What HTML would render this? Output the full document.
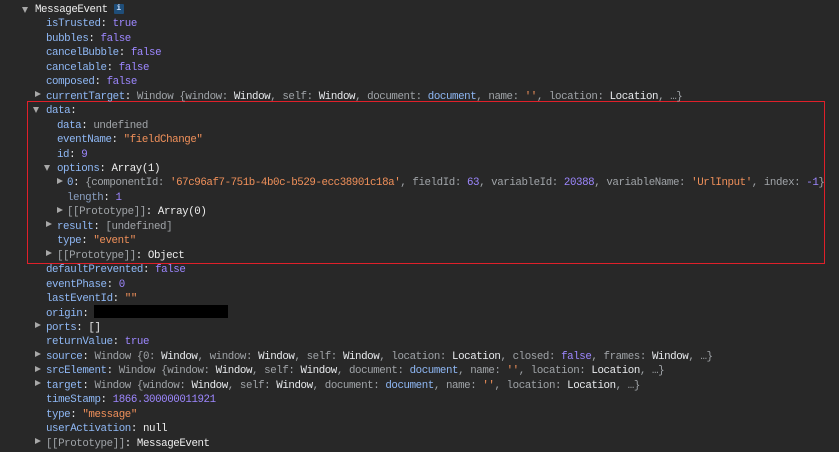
<!DOCTYPE html>
<html><head><meta charset="utf-8"><style>
body{margin:0;background:#282828;width:839px;height:452px;overflow:hidden;position:relative;font-family:"Liberation Mono",monospace;font-size:10.8px;letter-spacing:-0.42px;color:#e8eaed}
#w{position:absolute;left:0;top:2px;width:839px;height:450px}
.r{position:absolute;height:14px;line-height:14px;white-space:pre}
.k{color:#8fb8f5}.g{color:#a0a4a8}.n{color:#9d87ff}.s{color:#f0905a}.w{color:#eeeeee}
.tr{position:absolute;width:0;height:0;border-left:6px solid #a8a8a8;border-top:3.5px solid transparent;border-bottom:3.5px solid transparent}
.td{position:absolute;width:0;height:0;border-top:6px solid #a8a8a8;border-left:3.5px solid transparent;border-right:3.5px solid transparent}
.box{position:absolute;left:27px;top:101px;width:796px;height:161px;border:1px solid #e0202a}
.info{display:inline-block;width:10px;height:10px;background:#1f4e79;color:#cfe3ff;font-size:8px;line-height:10px;text-align:center;vertical-align:middle;border-radius:1px;font-weight:bold;letter-spacing:0}
.blk{position:absolute;left:94px;top:305px;width:134px;height:13px;background:#000}
</style></head><body>
<div class="box"></div>
<div class="blk"></div>
<div id="w">
<div class="td" style="left:22px;top:5px"></div><div class="r" style="left:35px;top:1px"><span class="w">MessageEvent</span> <span class="info">i</span></div>
<div class="r" style="left:46px;top:15.4px"><span class="k">isTrusted</span>: <span class="n">true</span></div>
<div class="r" style="left:46px;top:29.9px"><span class="k">bubbles</span>: <span class="n">false</span></div>
<div class="r" style="left:46px;top:44.3px"><span class="k">cancelBubble</span>: <span class="n">false</span></div>
<div class="r" style="left:46px;top:58.8px"><span class="k">cancelable</span>: <span class="n">false</span></div>
<div class="r" style="left:46px;top:73.2px"><span class="k">composed</span>: <span class="n">false</span></div>
<div class="tr" style="left:35px;top:89px"></div><div class="r" style="left:46px;top:87.7px"><span class="k">currentTarget</span>: <span class="g">Window {window: </span>Window<span class="g">, self: </span>Window<span class="g">, document: </span><span class="k">document</span><span class="g">, name: </span><span class="s">''</span><span class="g">, location: </span>Location<span class="g">, …}</span></div>
<div class="td" style="left:33px;top:105px"></div><div class="r" style="left:46px;top:102.1px"><span class="k">data</span>:</div>
<div class="r" style="left:57px;top:116.6px"><span class="k">data</span>: <span class="g">undefined</span></div>
<div class="r" style="left:57px;top:131px"><span class="k">eventName</span>: <span class="s">"fieldChange"</span></div>
<div class="r" style="left:57px;top:145.5px"><span class="k">id</span>: <span class="n">9</span></div>
<div class="td" style="left:44px;top:163px"></div><div class="r" style="left:57px;top:160px"><span class="k">options</span>: <span class="w">Array(1)</span></div>
<div class="tr" style="left:57px;top:176px"></div><div class="r" style="left:67px;top:174.4px"><span class="k">0</span>: <span class="g">{componentId: </span><span class="s">'67c96af7-751b-4b0c-b529-ecc38901c18a'</span><span class="g">, fieldId: </span><span class="n">63</span><span class="g">, variableId: </span><span class="n">20388</span><span class="g">, variableName: </span><span class="s">'UrlInput'</span><span class="g">, index: </span><span class="n">-1</span><span class="g">}</span></div>
<div class="r" style="left:67px;top:188.9px"><span class="k" style="color:#8a9fc0">length</span>: <span class="n">1</span></div>
<div class="tr" style="left:57px;top:205px"></div><div class="r" style="left:67px;top:203.3px"><span class="g">[[Prototype]]</span>: <span class="w">Array(0)</span></div>
<div class="tr" style="left:46px;top:219px"></div><div class="r" style="left:57px;top:217.8px"><span class="k">result</span>: <span class="g">[undefined]</span></div>
<div class="r" style="left:57px;top:232.2px"><span class="k">type</span>: <span class="s">"event"</span></div>
<div class="tr" style="left:46px;top:248px"></div><div class="r" style="left:57px;top:246.7px"><span class="g">[[Prototype]]</span>: <span class="w">Object</span></div>
<div class="r" style="left:46px;top:261.1px"><span class="k">defaultPrevented</span>: <span class="n">false</span></div>
<div class="r" style="left:46px;top:275.6px"><span class="k">eventPhase</span>: <span class="n">0</span></div>
<div class="r" style="left:46px;top:290px"><span class="k">lastEventId</span>: <span class="s">""</span></div>
<div class="r" style="left:46px;top:304.5px"><span class="k">origin</span>:</div>
<div class="tr" style="left:35px;top:320px"></div><div class="r" style="left:46px;top:318.9px"><span class="k">ports</span>: <span class="w">[]</span></div>
<div class="r" style="left:46px;top:333.4px"><span class="k">returnValue</span>: <span class="n">true</span></div>
<div class="tr" style="left:35px;top:349px"></div><div class="r" style="left:46px;top:347.8px"><span class="k">source</span>: <span class="g">Window {0: </span>Window<span class="g">, window: </span>Window<span class="g">, self: </span>Window<span class="g">, location: </span>Location<span class="g">, closed: </span><span class="n">false</span><span class="g">, frames: </span>Window<span class="g">, …}</span></div>
<div class="tr" style="left:35px;top:364px"></div><div class="r" style="left:46px;top:362.3px"><span class="k">srcElement</span>: <span class="g">Window {window: </span>Window<span class="g">, self: </span>Window<span class="g">, document: </span><span class="k">document</span><span class="g">, name: </span><span class="s">''</span><span class="g">, location: </span>Location<span class="g">, …}</span></div>
<div class="tr" style="left:35px;top:378px"></div><div class="r" style="left:46px;top:376.7px"><span class="k">target</span>: <span class="g">Window {window: </span>Window<span class="g">, self: </span>Window<span class="g">, document: </span><span class="k">document</span><span class="g">, name: </span><span class="s">''</span><span class="g">, location: </span>Location<span class="g">, …}</span></div>
<div class="r" style="left:46px;top:391.2px"><span class="k">timeStamp</span>: <span class="n">1866.300000011921</span></div>
<div class="r" style="left:46px;top:405.6px"><span class="k">type</span>: <span class="s">"message"</span></div>
<div class="r" style="left:46px;top:420.1px"><span class="k">userActivation</span>: <span class="w">null</span></div>
<div class="tr" style="left:35px;top:436px"></div><div class="r" style="left:46px;top:434.5px"><span class="g">[[Prototype]]</span>: <span class="w">MessageEvent</span></div>
</div>
</body></html>
